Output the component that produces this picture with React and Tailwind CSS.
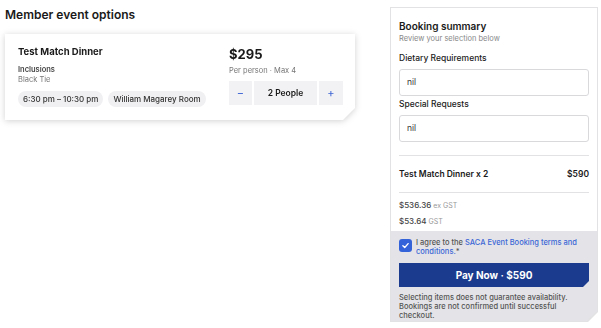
import React from "react";

export default function App() {
  return (
    <div className="w-[601px] h-[328px] bg-white flex text-[#1a1a1a]" style={{ fontFamily: "Inter, 'Noto Sans', sans-serif" }}>
      {/* Left */}
      <div className="w-[385px] pl-[5px] pt-[6px]">
        <h1 className="text-[12px] leading-[17px] font-semibold">Member event options</h1>
        <div className="mt-[11px] w-[350px] drop-shadow-[0_1px_3px_rgba(0,0,0,0.18)]">
          <div className="bg-white h-[86px] flex pl-[13px] pt-[12px] [clip-path:polygon(0_0,100%_0,100%_calc(100%-12px),calc(100%-12px)_100%,0_100%)]">
            <div className="w-[211px]">
              <div className="text-[9.5px] leading-[12px] font-bold">Test Match Dinner</div>
              <div className="mt-[7px] text-[7.5px] leading-[10px] font-semibold text-[#444]">Inclusions</div>
              <div className="text-[7.5px] leading-[10px] text-[#777]">Black Tie</div>
              <div className="mt-[6px] flex gap-[5px]">
                <span className="h-[16px] px-[5px] rounded-full bg-[#f0f0f3] text-[8px] leading-[16px] font-medium text-[#333]">6:30 pm – 10:30 pm</span>
                <span className="h-[16px] px-[5px] rounded-full bg-[#f0f0f3] text-[8px] leading-[16px] font-medium text-[#333]">William Magarey Room</span>
              </div>
            </div>
            <div className="flex flex-col">
              <div className="text-[13px] leading-[16px] font-bold">$295</div>
              <div className="mt-[4px] text-[7.5px] leading-[10px] text-[#777]">Per person · Max 4</div>
              <div className="mt-[5px] flex h-[24px] gap-[2px]">
                <button className="w-[23px] bg-[#f2f2f4] text-[#3b63d3] text-[11px] leading-[24px] text-center">−</button>
                <div className="w-[63px] bg-[#f2f2f4] text-[8.5px] leading-[24px] font-semibold text-center">2 People</div>
                <button className="w-[24px] bg-[#f2f2f4] text-[#3b63d3] text-[11px] leading-[24px] text-center">+</button>
              </div>
            </div>
          </div>
        </div>
      </div>

      {/* Right panel */}
      <div className="ml-[5px] mt-[7px] w-[208px] h-[315px] bg-[#e2e2e4] p-px [clip-path:polygon(0_0,100%_0,100%_calc(100%-10px),calc(100%-10px)_100%,0_100%)]">
        <div className="h-full flex flex-col [clip-path:polygon(0_0,100%_0,100%_calc(100%-10px),calc(100%-10px)_100%,0_100%)]">
          <div className="bg-white px-[8px] pt-[12px] h-[223px] shrink-0 overflow-hidden">
            <div className="text-[10px] leading-[13px] font-semibold">Booking summary</div>
            <div className="text-[7.5px] leading-[12px] text-[#888]">Review your selection below</div>
            <div className="mt-[8px] text-[8.5px] leading-[11px] font-medium text-[#222]">Dietary Requirements</div>
            <div className="mt-[5px] h-[27px] border border-[#d9d9dc] rounded-[3px] px-[7px] text-[8.5px] leading-[25px] text-[#333]">nil</div>
            <div className="mt-[3px] text-[8.5px] leading-[11px] font-medium text-[#222]">Special Requests</div>
            <div className="mt-[5px] h-[27px] border border-[#d9d9dc] rounded-[3px] px-[7px] text-[8.5px] leading-[25px] text-[#333]">nil</div>
            <div className="mt-[13px] h-px bg-[#e2e2e4]" />
            <div className="mt-[12px] flex justify-between text-[8.5px] leading-[12px] font-semibold">
              <span>Test Match Dinner x 2</span>
              <span>$590</span>
            </div>
            <div className="mt-[12px] h-px bg-[#e2e2e4]" />
            <div className="mt-[6px] text-[8px] leading-[12px] text-[#444] font-medium">$536.36 <span className="text-[7px] text-[#999] font-normal">ex GST</span></div>
            <div className="mt-[3px] text-[8px] leading-[12px] text-[#444] font-medium">$53.64 <span className="text-[7px] text-[#999] font-normal">GST</span></div>
          </div>
          <div className="flex-1 bg-[#e4e4e8] px-[8px] pt-[7px]">
            <div className="flex gap-[4px]">
              <div className="w-[13px] h-[13px] shrink-0 rounded-[3px] bg-[#3462d8] flex items-center justify-center mt-[1px]">
                <svg width="9" height="9" viewBox="0 0 12 12" fill="none" stroke="white" strokeWidth="1.8" strokeLinecap="round" strokeLinejoin="round"><path d="M2.5 6.2 5 8.6 9.5 3.5" /></svg>
              </div>
              <div className="flex flex-col text-[7.5px] leading-[9px] font-medium text-[#555]">
                <div>I agree to the <span className="text-[#3b67d6]">SACA Event Booking terms and</span></div>
                <div><span className="text-[#3b67d6]">conditions.</span>*</div>
              </div>
            </div>
            <div className="mt-[7px] h-[24px] bg-[#1b3b8e] text-white text-[10px] leading-[24px] font-bold text-center [clip-path:polygon(0_0,100%_0,100%_calc(100%-6px),calc(100%-6px)_100%,0_100%)]">
              Pay Now · $590
            </div>
            <div className="mt-[6px] text-[7.5px] leading-[9px] text-[#555] font-medium">
              Selecting items does not guarantee availability. Bookings are not confirmed until successful checkout.
            </div>
          </div>
        </div>
      </div>
    </div>
  );
}
